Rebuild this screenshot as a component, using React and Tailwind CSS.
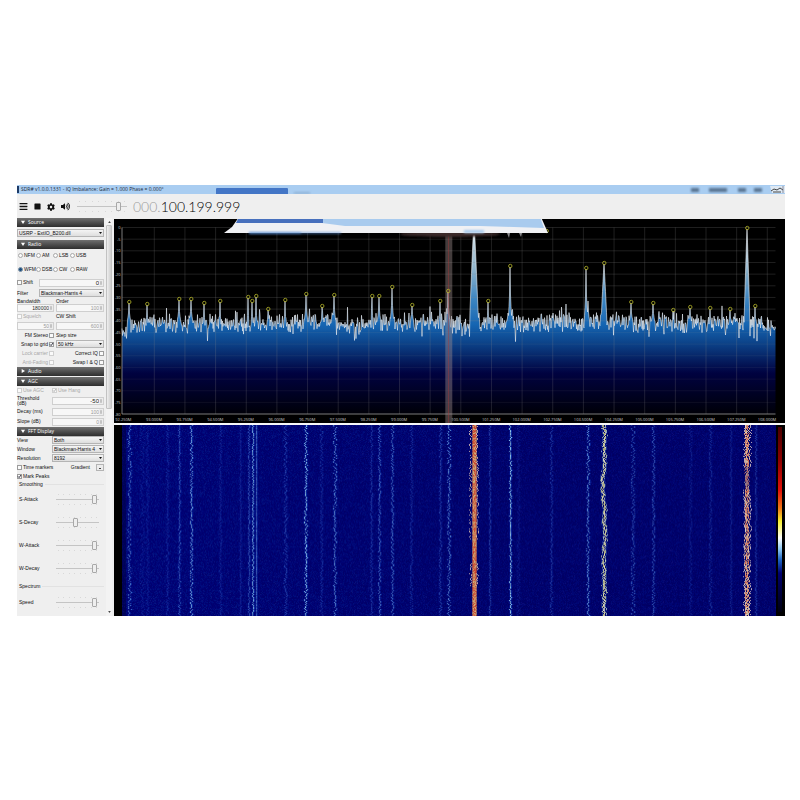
import React, { useEffect, useId, useRef, useState } from 'react';
import { FaBars, FaStop, FaCog, FaVolumeUp } from 'react-icons/fa';

// small seeded generator so the trace is stable between renders
function makeRandom(seed) {
  let s = seed;
  return () => {
    s = (s * 1664525 + 1013904223) % 4294967296;
    return s / 4294967296;
  };
}

/* ---------- sidebar controls ---------- */

function SectionHeader({ title, open = true }) {
  return (
    <button
      type="button"
      className="flex items-center gap-[3px] w-full h-[9px] pl-1 bg-linear-to-b from-[#707070] to-[#2e2e2e] text-white font-['Open_Sans',sans-serif] text-[5px] leading-[9px]"
    >
      <svg viewBox="0 0 6 6" className="w-1 h-1" fill="white">
        {open ? <path d="M0 1h6L3 6z" /> : <path d="M1 0v6l5-3z" />}
      </svg>
      {title}
    </button>
  );
}

function Select({ value, label, id }) {
  return (
    <div className="relative w-full">
      <select
        id={id}
        aria-label={label}
        defaultValue={value}
        className="block appearance-none w-full h-2 pl-[1px] pr-[6px] border border-[#b4b4b4] bg-linear-to-b from-[#f4f4f4] to-[#dedede] text-[#111] text-[5px] leading-[6px]"
      >
        <option>{value}</option>
      </select>
      <svg viewBox="0 0 6 4" className="absolute right-[2px] top-[3px] w-[3px] h-[2px] pointer-events-none" fill="#111">
        <path d="M0 0h6L3 4z" />
      </svg>
    </div>
  );
}

function Spinner({ value, label, id, disabled, big }) {
  return (
    <div className="flex w-full h-2 border border-[#cfcfcf] bg-[#f7f7f7]">
      <input
        id={id}
        aria-label={label}
        type="text"
        defaultValue={value}
        disabled={disabled}
        className={
          (big ? 'text-[6px] ' : 'text-[5px] ') +
          (disabled ? 'text-[#9a9a9a] ' : 'text-[#222] ') +
          'w-full min-w-0 h-[6px] text-right bg-transparent leading-[6px]'
        }
      />
      <svg viewBox="0 0 4 6" className="w-1 h-[6px] shrink-0" fill="#8a8a8a">
        <rect width="4" height="6" fill="#ececec" />
        <path d="M1 2.4 2 1l1 1.4zM1 3.6 2 5l1-1.4z" />
      </svg>
    </div>
  );
}

function Check({ label, checked, disabled, boxLast }) {
  return (
    <label
      className={
        (disabled ? 'text-[#a8a8a8] ' : 'text-[#111] ') +
        (boxLast ? 'flex-row-reverse ' : '') +
        'flex items-center gap-[1px] whitespace-nowrap'
      }
    >
      <span className="relative flex">
        <input
          type="checkbox"
          defaultChecked={checked}
          disabled={disabled}
          className="peer appearance-none w-[5px] h-[5px] border border-[#9c9c9c] bg-[#fafafa] disabled:border-[#d0d0d0]"
        />
        <svg
          viewBox="0 0 5 5"
          className="absolute inset-0 w-[5px] h-[5px] hidden peer-checked:block pointer-events-none"
          fill="none"
          stroke={disabled ? '#aaa' : '#223'}
        >
          <path d="M1 2.4 2.1 3.6 4 1" strokeWidth="0.9" />
        </svg>
      </span>
      {label}
    </label>
  );
}

function Mode({ name, mode, onPick }) {
  return (
    <label className="flex items-center gap-[1px] text-[#111]">
      <input
        type="radio"
        name="mode"
        checked={mode === name}
        onChange={() => onPick(name)}
        className="appearance-none shrink-0 w-[5px] h-[5px] rounded-full border border-[#a8a8a8] bg-[#fafafa] checked:bg-[#1c4f80] checked:border-[#7f93a6]"
      />
      {name}
    </label>
  );
}

const RANGE =
  'block appearance-none w-full h-[9px] bg-transparent ' +
  '[&::-webkit-slider-runnable-track]:h-px [&::-webkit-slider-runnable-track]:bg-[#c4c4c4] ' +
  '[&::-webkit-slider-thumb]:appearance-none [&::-webkit-slider-thumb]:w-[5px] [&::-webkit-slider-thumb]:h-[9px] ' +
  '[&::-webkit-slider-thumb]:-mt-1 [&::-webkit-slider-thumb]:rounded-[1px] [&::-webkit-slider-thumb]:border ' +
  '[&::-webkit-slider-thumb]:border-solid [&::-webkit-slider-thumb]:border-[#a8a8a8] [&::-webkit-slider-thumb]:bg-[#eeeeee]';

function Ticks() {
  return (
    <div className="flex justify-between px-[2px]">
      {Array.from({ length: 8 }).map((_, i) => (
        <span key={i} className="w-px h-px bg-[#d8d8d8]" />
      ))}
    </div>
  );
}

function SliderRow({ label, value, short }) {
  const id = useId();
  return (
    <div className={(short ? 'h-[18px] ' : 'h-[23px] ') + 'flex items-center pl-[2px] pr-[5px]'}>
      <label htmlFor={id} className="flex-1">{label}</label>
      <div className="w-[43px]">
        <Ticks />
        <input id={id} type="range" min="0" max="100" defaultValue={value} className={RANGE} />
        <Ticks />
      </div>
    </div>
  );
}

function FieldRow({ label, children, id }) {
  return (
    <div className="grid grid-cols-[35px_1fr] items-center h-[9px]">
      <label htmlFor={id}>{label}</label>
      {children}
    </div>
  );
}

function Group({ label, tall }) {
  return (
    <div className={(tall ? 'h-[14px] ' : 'h-[7px] ') + 'flex items-center gap-[2px] pl-[2px]'}>
      {label}
      <span className="flex-1 h-px bg-[#e2e2e2]" />
    </div>
  );
}

function Sidebar() {
  const [mode, setMode] = useState('WFM');
  return (
    <aside className="w-[87px] shrink-0 pb-1 text-[5px] leading-[5px] text-[#111] font-['Liberation_Sans',sans-serif]">
      <SectionHeader title="Source" />
      <div className="flex items-center h-[13px]">
        <Select label="Source" value="USRP - ExtIO_B200.dll" />
      </div>

      <SectionHeader title="Radio" />
      <div className="grid grid-cols-[18px_17px_17px_17px] auto-rows-[14px] items-center pl-[1px]">
        {['NFM', 'AM', 'LSB', 'USB', 'WFM', 'DSB', 'CW', 'RAW'].map((m) => (
          <Mode key={m} name={m} mode={mode} onPick={setMode} />
        ))}
      </div>
      <div className="grid grid-cols-[22px_1fr] items-center h-3">
        <Check label="Shift" />
        <Spinner big label="Shift value" value="0" />
      </div>
      <div className="grid grid-cols-[22px_1fr] items-center h-[9px]">
        <label htmlFor="filter">Filter</label>
        <Select id="filter" value="Blackman-Harris 4" />
      </div>
      <div className="grid grid-cols-[37px_1fr] gap-x-[2px] items-center">
        <label htmlFor="bw" className="leading-[6px]">Bandwidth</label>
        <label htmlFor="order" className="leading-[6px]">Order</label>
        <Spinner id="bw" value="180000" />
        <Spinner id="order" value="100" disabled />
        <div className="flex items-center h-[10px]">
          <Check label="Squelch" disabled />
        </div>
        <label htmlFor="cw">CW Shift</label>
        <Spinner label="Squelch level" value="50" disabled />
        <Spinner id="cw" value="600" disabled />
      </div>
      <div className="grid grid-cols-[37px_1fr] gap-x-[2px] auto-rows-[9px] items-center pt-[1px]">
        <Check label="FM Stereo" boxLast />
        <label htmlFor="step">Step size</label>
        <Check label="Snap to grid" checked boxLast />
        <Select id="step" value="50 kHz" />
        <Check label="Lock carrier" disabled boxLast />
        <Check label="Correct IQ" boxLast />
        <Check label="Anti-Fading" disabled boxLast />
        <Check label="Swap I & Q" boxLast />
      </div>

      <div className="flex flex-col gap-[1px]">
        <SectionHeader title="Audio" open={false} />
        <SectionHeader title="AGC" />
      </div>
      <div className="grid grid-cols-[35px_1fr] items-center h-[9px]">
        <Check label="Use AGC" disabled />
        <Check label="Use Hang" checked disabled />
      </div>
      <div className="grid grid-cols-[35px_1fr] items-center h-3">
        <label htmlFor="thr">Threshold<br />(dB)</label>
        <Spinner big id="thr" value="-50" />
      </div>
      <div className="grid grid-cols-[35px_1fr] auto-rows-[10px] items-center">
        <label htmlFor="decay">Decay (ms)</label>
        <Spinner id="decay" value="100" disabled />
        <label htmlFor="slope">Slope (dB)</label>
        <Spinner id="slope" value="0" disabled />
      </div>

      <SectionHeader title="FFT Display" />
      <FieldRow id="view" label="View"><Select id="view" value="Both" /></FieldRow>
      <FieldRow id="window" label="Window"><Select id="window" value="Blackman-Harris 4" /></FieldRow>
      <FieldRow id="res" label="Resolution"><Select id="res" value="8192" /></FieldRow>
      <div className="flex items-center justify-between h-[9px]">
        <Check label="Time markers" />
        <span className="flex items-center gap-[6px]">
          Gradient
          <button type="button" aria-label="Edit gradient" className="flex items-end justify-center w-2 h-[7px] border border-[#b4b4b4] bg-[#ececec]">
            <span className="w-[2px] h-px mb-[1px] bg-[#444]" />
          </button>
        </span>
      </div>
      <div className="flex items-center h-[9px]">
        <Check label="Mark Peaks" checked />
      </div>
      <Group label="Smoothing" />
      <SliderRow label="S-Attack" value="95" />
      <SliderRow label="S-Decay" value="45" />
      <SliderRow label="W-Attack" value="95" />
      <SliderRow label="W-Decay" value="95" />
      <Group label="Spectrum" tall />
      <SliderRow label="Speed" value="95" short />
    </aside>
  );
}

function Scrollbar() {
  return (
    <div className="flex flex-col items-center w-[6px] ml-[2px] mr-[2px] py-[3px] bg-[#f3f3f3]">
      <svg viewBox="0 0 4 3" className="w-[3px] h-[2px]" fill="#444"><path d="M0 3h4L2 0z" /></svg>
      <div className="w-full h-[184px] mt-[2px] rounded-[1px] border border-[#c2c2c2] bg-linear-to-r from-[#efefef] to-[#cdcdcd]" />
      <svg viewBox="0 0 4 3" className="w-[3px] h-[2px] mt-auto" fill="#444"><path d="M0 0h4L2 3z" /></svg>
    </div>
  );
}

/* ---------- spectrum ---------- */

// x, y of each marked peak and the half width of its base
const PEAKS = [
  [129, 301, 2], [147, 303, 1], [179, 298, 2], [191, 298, 2], [204, 302, 1], [220, 300, 1],
  [248, 296, 1], [252, 300, 1], [256, 295, 1], [268, 308, 1], [285, 299, 1], [306, 293, 2],
  [322, 305, 1], [334, 294, 2], [372, 295, 1], [379, 295, 2], [392, 286, 2], [412, 304, 2],
  [440, 300, 1], [448, 290, 2], [488, 300, 1], [510, 265, 2], [586, 267, 2], [604, 262, 3],
  [631, 301, 2], [653, 302, 2], [673, 309, 1], [690, 306, 2], [710, 307, 1], [730, 308, 1],
  [747, 227, 3], [755, 305, 1],
];

// stations without a marker of their own
const HIDDEN_PEAKS = [[473.5, 228, 4], [474.5, 228, 4], [553, 311, 2], [588, 299, 2], [512, 308, 2], [508, 311, 2]];

function buildTrace() {
  const rnd = makeRandom(77);
  const pts = [];
  for (let x = 122; x <= 775.5; x += 0.5) {
    const edge = x < 127 ? 9 : x > 762 ? 5 : 0;
    let y = 322 + edge + Math.sin(x / 9) * 1.5 + (rnd() + rnd() - 1) * 10;
    const spike = rnd();
    if (spike < 0.06) y -= 5 + rnd() * 5;
    if (spike > 0.94) y += 4 + rnd() * 7;
    for (const [px, py, w] of [...PEAKS, ...HIDDEN_PEAKS]) {
      const d = Math.abs(x - px);
      if (d < w) {
        const top = py + 1 + (321 - py) * Math.pow(d / w, w > 2 ? 1.1 : 0.5);
        y = Math.min(y, top);
      }
    }
    pts.push(`${x} ${y.toFixed(1)}`);
  }
  return pts.join('L');
}

const TRACE = buildTrace();
const FREQS = Array.from({ length: 22 }).map((_, i) => (92.25 + i * 0.75).toFixed(3) + 'M');

function Spectrum() {
  return (
    <svg viewBox="114 218 671 204" className="block w-full h-auto bg-black">
      <defs>
        <linearGradient id="fill" gradientUnits="userSpaceOnUse" x1="0" y1="227" x2="0" y2="413">
          <stop offset="0" stopColor="#d8e4ea" />
          <stop offset="0.22" stopColor="#8fb4cc" />
          <stop offset="0.38" stopColor="#3d86c2" />
          <stop offset="0.52" stopColor="#1565b2" />
          <stop offset="0.62" stopColor="#0c4288" />
          <stop offset="0.78" stopColor="#000240" />
          <stop offset="1" stopColor="#000008" />
        </linearGradient>
        <filter id="soft" x="-10%" y="-50%" width="120%" height="200%">
          <feGaussianBlur stdDeviation="1" />
        </filter>
        <filter id="edge" x="-5%" y="-20%" width="110%" height="140%">
          <feGaussianBlur stdDeviation="0.6" />
        </filter>
      </defs>

      <path d={`M122 413L${TRACE}L775.5 413z`} fill="url(#fill)" />

      {/* grid */}
      <g stroke="#8a8a8a" strokeOpacity="0.32" strokeWidth="0.7">
        {FREQS.slice(1).map((f, i) => (
          <line key={f} x1={154.3 + i * 30.65} x2={154.3 + i * 30.65} y1="226.5" y2="413" />
        ))}
        {Array.from({ length: 16 }).map((_, i) => (
          <line
            key={i}
            x1="122"
            x2="775.5"
            y1={226.5 + i * 11.66}
            y2={226.5 + i * 11.66}
            strokeOpacity={i > 8 ? 0.14 : 0.32}
          />
        ))}
      </g>
      <path d="M122 226.5V413H775.5" fill="none" stroke="#9a9a9a" strokeWidth="0.8" />

      <path d={`M${TRACE}`} fill="none" stroke="#eef3f8" strokeWidth="0.6" />

      {/* tuned band */}
      <rect x="445.3" y="232" width="7" height="190" fill="#a09090" fillOpacity="0.42" />
      <line x1="448.6" x2="448.6" y1="232" y2="422" stroke="#b03838" strokeOpacity="0.45" />

      <g fill="none" stroke="#b6b62a" strokeWidth="0.8">
        {PEAKS.map(([x, y]) => <circle key={x} cx={x + 0.3} cy={y} r="1.7" />)}
        <circle cx="546.7" cy="230" r="1.7" />
      </g>

      {/* torn strip across the top */}
      <ellipse cx="450" cy="233" rx="50" ry="3" fill="#3a2a2a" filter="url(#soft)" />
      <g filter="url(#edge)">
        <path d="M224 232 232 226 239 216H541L548 232z" fill="#f0f1f4" />
        <path d="M322 216H540L544 227 480 225H345L322 222z" fill="#a9cbee" />
        <path d="M239 216H323V222H236z" fill="#4670bd" />
      </g>
      <g filter="url(#soft)" fill="#5a8fd4">
        <rect x="249" y="231" width="52" height="2" />
        <rect x="301" y="231" width="40" height="2" opacity="0.6" />
        <rect x="464" y="229" width="20" height="3" fill="#a9cbee" />
      </g>
      <path d="M507 232h3l-1 5zM519 232h3l-1 4z" fill="#e8e8ec" opacity="0.6" />

      <g fill="#c9c9c9" fontFamily="'Open Sans', sans-serif" fontSize="4">
        {Array.from({ length: 17 }).map((_, i) => (
          <text key={i} x="120.5" y={228 + i * 11.66} textAnchor="end">{i === 0 ? '0' : -5 * i}</text>
        ))}
        {FREQS.map((f, i) => (
          <text key={f} x={123.3 + i * 30.65} y="419.5" textAnchor="middle">{f}</text>
        ))}
      </g>
    </svg>
  );
}

/* ---------- waterfall ---------- */

// x, strength, jitter
const STREAKS = [
  [15, 0.65, 1.6], [28, 0.2, 2], [33, 0.2, 1], [53, 0.25, 1], [65, 0.5, 0.8], [77, 0.8, 1.2],
  [106, 0.25, 1], [126, 0.25, 0.6], [134.5, 0.5, 0.3], [138.5, 0.85, 1], [142, 0.6, 0.4],
  [171, 0.4, 1.6], [191.5, 0.95, 1.2], [207, 0.3, 1.2], [220.5, 0.7, 1.4], [257, 0.35, 0.8],
  [265, 0.6, 1], [278, 0.6, 1], [297, 0.3, 1.2], [326, 0.4, 1], [334.5, 0.7, 1.5],
  [375.5, 0.4, 0.2], [396, 0.98, 0.7], [404, 0.2, 1.5], [437, 0.35, 1], [473.5, 0.75, 1.4],
  [518.5, 0.5, 1.8], [539, 0.5, 1.4], [576, 0.22, 1.5], [596, 0.3, 1.2], [616.5, 0.25, 0.8],
  [641.5, 0.35, 0.3],
];

function paint(ctx, w, h) {
  const rnd = makeRandom(1331);
  ctx.fillStyle = '#000';
  ctx.fillRect(0, 0, w, h);
  const img = ctx.getImageData(0, 0, w, h);
  const put = (x, y, r, g, b, a = 1) => {
    const i = (y * w + Math.round(x)) * 4;
    img.data[i] += (r - img.data[i]) * a;
    img.data[i + 1] += (g - img.data[i + 1]) * a;
    img.data[i + 2] += (b - img.data[i + 2]) * a;
  };

  let drift = 0;
  for (let y = 0; y < h; y++) {
    for (let x = 8; x < 662; x++) {
      const lift = Math.max(0, 1 - x / 420) * 12;
      const n = rnd();
      put(x, y, n > 0.96 ? 10 : 0, n * n * n * (12 + lift), 98 + lift + n * 22);
      if (x < 12) put(x, y, 0, 0, 60, 0.5);
    }
    for (const [sx, k, j] of STREAKS) {
      const x = sx + (rnd() - 0.5) * 2 * j;
      const a = k * (0.45 + rnd() * 0.55);
      put(x, y, 50 + k * 100, 105 + k * 100, 235, a);
      put(x + 1, y, 20, 80, 210, a * 0.6);
      put(x - 1, y, 10, 50, 190, a * 0.4);
    }

    // the three strong stations
    drift = drift * 0.8 + (rnd() - 0.5) * 1.6;
    const wide = y < 115 || (y > 138 && y < 162);
    for (let d = -2; d <= 2; d++) {
      const c = rnd();
      put(359.5 + d, y, 215, 60 + c * 130, 35 + c * 90, Math.abs(d) === 2 ? 0.65 : 0.95);
    }
    if (wide && rnd() > 0.3) {
      put(357 - rnd() * 2, y, 240, 210, 185, 0.75);
      put(362 + rnd() * 2, y, 240, 210, 185, 0.75);
    }

    const yx = 489.5 + drift;
    for (let d = -1; d <= 1; d++) {
      const c = rnd();
      put(yx + d + (rnd() - 0.5) * 2, y, 220 + c * 20, 220 + c * 20, 110 + c * 110, 0.75);
    }
    put(yx - 2, y, 90, 160, 225, 0.3);
    put(yx + 2, y, 90, 160, 225, 0.3);

    const calm = y > 41 && y < 65;
    for (let d = -1; d <= 2; d++) {
      const c = rnd();
      put(632 + d + (rnd() - 0.5) * 1.4, y, 225, 95 + c * 130, 60 + c * 130, calm ? 0.65 : 0.9);
    }
    if (!calm && rnd() > 0.3) {
      put(631 - rnd() * 2 + drift * 0.4, y, 240, 220, 205, 0.75);
      put(634.5 + rnd() * 2 + drift * 0.4, y, 240, 220, 205, 0.75);
    }
  }
  ctx.putImageData(img, 0, 0);

  const grad = ctx.createLinearGradient(0, 2, 0, 188);
  grad.addColorStop(0, '#4a0000');
  grad.addColorStop(0.18, '#8c0000');
  grad.addColorStop(0.34, '#e01008');
  grad.addColorStop(0.44, '#f07818');
  grad.addColorStop(0.51, '#f8f030');
  grad.addColorStop(0.6, '#ffffff');
  grad.addColorStop(0.66, '#8cc8f4');
  grad.addColorStop(0.72, '#1c60c0');
  grad.addColorStop(0.79, '#000070');
  grad.addColorStop(1, '#000010');
  ctx.fillStyle = grad;
  ctx.fillRect(664, 2, 4, 186);
}

function Waterfall() {
  const ref = useRef(null);
  useEffect(() => {
    paint(ref.current.getContext('2d'), 671, 192);
  }, []);
  return (
    <div className="relative flex-1 min-h-[100px] bg-black">
      <canvas ref={ref} width="671" height="192" className="absolute inset-0 block w-full h-full" />
    </div>
  );
}

/* ---------- window ---------- */

function TitleBar() {
  return (
    <header className="flex items-center h-[9px] bg-[#a9cdf1] overflow-hidden font-['Open_Sans',sans-serif] text-[5px] leading-[9px] text-[#1d2a3a]">
      <span className="w-[2px] h-[7px] mr-[2px] bg-[#1d3a66]" />
      <h1 className="whitespace-nowrap w-[195px]">SDR# v1.0.0.1331 - IQ Imbalance: Gain = 1.000 Phase = 0.000°</h1>
      <span className="self-end w-[72px] h-[6px] rounded-t-[1px] bg-[#4376c6]" />
      <span className="self-end w-4 h-[2px] ml-[6px] bg-[#8fb2d6] blur-[1px]" />
      <svg viewBox="0 0 96 9" className="w-24 h-[9px] ml-auto shrink-0">
        <g fill="#3f5873" opacity="0.75" className="blur-[1px]">
          <rect x="2" y="3" width="8" height="4" />
          <rect x="20" y="3" width="18" height="4" />
          <rect x="49" y="3" width="8" height="4" />
          <rect x="65" y="3" width="8" height="4" />
        </g>
        <path d="M81 1h15v7H83z" fill="#dfe9f3" />
        <path d="M82 6l3-2 3 1 3-2 3 2M84 7h8" fill="none" stroke="#333" strokeWidth="0.9" />
        <path d="M94 1v7" stroke="#667" strokeWidth="0.7" />
      </svg>
    </header>
  );
}

function Toolbar() {
  return (
    <div className="flex items-center h-6 pt-[2px] pl-[2px] bg-[#efefef] text-[#111]">
      <button type="button" aria-label="Menu"><FaBars size={9} /></button>
      <button type="button" aria-label="Stop" className="ml-[6px]"><FaStop size={7} /></button>
      <button type="button" aria-label="Settings" className="ml-[6px]"><FaCog size={8} /></button>
      <button type="button" aria-label="Mute" className="ml-[6px]"><FaVolumeUp size={9} /></button>
      <div className="w-[50px] ml-[7px]">
        <Ticks />
        <input type="range" aria-label="Volume" min="0" max="100" defaultValue="87" className={RANGE} />
        <Ticks />
      </div>
      <output className="ml-[6px] font-['Lato',sans-serif] font-light text-[14px] leading-4 text-black">
        <span className="text-[#9c9c9c]">000.</span>100.199.999
      </output>
    </div>
  );
}

export default function App() {
  return (
    <div className="flex flex-col justify-center min-h-screen pl-[17px] pr-[15px] bg-white">
      <div className="bg-[#efefef]">
        <TitleBar />
        <Toolbar />
        <div className="flex">
          <Sidebar />
          <Scrollbar />
          <main className="flex flex-col flex-1 min-w-0 gap-[2px] pt-[1px] bg-linear-to-b from-[#efefef] to-white">
            <Spectrum />
            <Waterfall />
          </main>
        </div>
      </div>
    </div>
  );
}
